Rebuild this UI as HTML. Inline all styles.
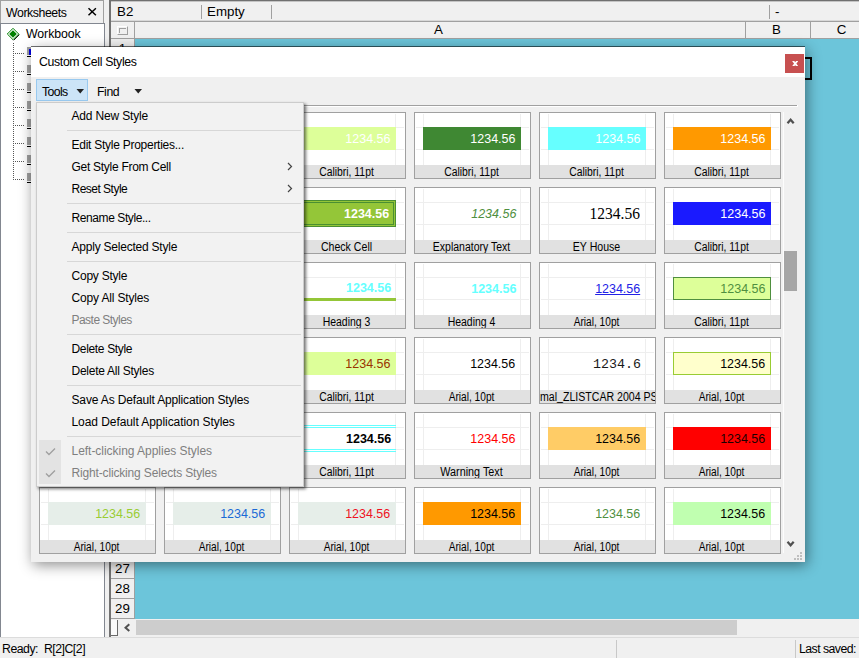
<!DOCTYPE html>
<html><head><meta charset="utf-8">
<style>
*{box-sizing:border-box;margin:0;padding:0}
html,body{width:859px;height:658px;overflow:hidden;background:#f0f0f0;font-family:"Liberation Sans",sans-serif;font-size:12px;color:#000}
.a{position:absolute}
.t{position:absolute;white-space:nowrap;line-height:1}
/* left panel */
#lh{left:0;top:0;width:104px;height:24px;border:1px solid #a0a0a0;background:#f0f0f0}
#lt{left:0;top:23px;width:105px;height:615px;border:1px solid #828790;background:#fff}
/* right panel */
#rp{left:109px;top:0;width:750px;height:638px;border-left:2px solid #727272;border-top:1px solid #707070;background:#f0f0f0;box-shadow:inset 0 1px 0 #c4c4c4}
#grid{left:135px;top:39px;width:724px;height:580px;background:#6cc5da}
.hc{position:absolute;top:22px;height:17px;border-right:1px solid #a0a0a0;border-bottom:1px solid #a0a0a0;background:#f0f0f0;font-size:13.33px;text-align:center;line-height:16px;padding-right:3px}
.rh{position:absolute;left:111px;width:24px;height:20px;border-right:1px solid #a0a0a0;border-bottom:1px solid #a0a0a0;background:#f0f0f0;font-size:13.33px;text-align:center;line-height:20px}
/* dialog */
#dlg{left:31px;top:47px;width:774px;height:515px;background:#f0f0f0;box-shadow:2px 3px 13px rgba(0,0,0,.45)}
#ttl{left:0;top:0;width:774px;height:30px;background:#fff}
.tile{position:absolute;width:117px;height:67px;border:1px solid #a0a0a0;background:#fff;overflow:hidden}
.tile .v1,.tile .v2{position:absolute;top:1px;width:1px;height:51px;background:#eee}
.tile .v1{left:8px}.tile .v2{left:105px}
.tile .h1,.tile .h2{position:absolute;left:1px;width:113px;height:1px;background:#eee}
.tile .h1{top:14px}.tile .h2{top:36px}
.tile .f{position:absolute;left:8px;top:14px;width:98px;height:23px}
.tile .n{position:absolute;right:14.5px;top:15px;height:23px;line-height:23px;font-size:12.5px;white-space:nowrap;transform-origin:100% 50%}
.tile .n.ar{top:14px;font-size:13.33px;transform:scaleX(.935)}
.tile .lb{position:absolute;left:0;top:52px;width:115px;height:13px;background:#e1e1e1;overflow:hidden}
.tile .lb span{position:absolute;left:-101px;width:315px;top:0;text-align:center;font-size:12px;line-height:14px;white-space:nowrap;transform:scaleX(.87)}
/* menu */
#menu{left:36px;top:102px;width:268px;height:385px;background:#f2f2f2;border:1px solid #ccc;box-shadow:2px 2px 3px rgba(0,0,0,.55)}
.mi{position:absolute;left:34.5px;font-size:12px;line-height:22px;height:22px;white-space:nowrap}
.mi.d{color:#7f7f7f}
.ms{position:absolute;left:30px;width:234px;height:1px;background:#d7d7d7}
</style></head><body>
<!-- left -->
<div class="a" id="lh"></div>
<div class="t" style="left:6px;top:7px;font-size:12.3px;letter-spacing:-0.42px">Worksheets</div>
<svg class="a" style="left:87px;top:7px" width="10" height="9"><path d="M1.5 1.3L8.9 8.2M8.9 1.3L1.5 8.2" stroke="#000" stroke-width="1.5" fill="none"/></svg>
<div class="a" id="lt"></div>
<svg class="a" style="left:6px;top:27px" width="15" height="14"><path d="M7.6 13.3L13.3 7.6" stroke="#000" stroke-width="1" fill="none"/><path d="M7 1.3L12.7 7L7 12.7L1.3 7Z" fill="#fff" stroke="#008000" stroke-width="1"/><path d="M7 3.2L10.8 7L7 10.8L3.2 7Z" fill="#008000"/></svg>
<div class="t" style="left:26px;top:28px;font-size:12.3px;letter-spacing:-0.06px">Workbook</div>
<svg class="a" style="left:10px;top:42px" width="24" height="145" shape-rendering="crispEdges"><path d="M3.5 1V138" stroke="#555" stroke-width="1" stroke-dasharray="1 1" fill="none"/><g stroke="#555" stroke-width="1" stroke-dasharray="1 1" fill="none"><path d="M5 11.5H15M5 29.5H15M5 47.5H15M5 65.5H15M5 83.5H15M5 101.5H15M5 119.5H15M5 137.5H15"/></g><g fill="#a0a0a0"><rect x="17" y="5" width="4" height="8"/><rect x="17" y="23" width="4" height="8"/><rect x="17" y="41" width="4" height="8"/><rect x="17" y="59" width="4" height="8"/><rect x="17" y="77" width="4" height="8"/><rect x="17" y="95" width="4" height="8"/><rect x="17" y="113" width="4" height="8"/><rect x="17" y="131" width="4" height="8"/></g><rect x="19" y="7" width="2" height="6" fill="#0000e0"/><g fill="#000"><rect x="17" y="14" width="4" height="1"/><rect x="17" y="32" width="4" height="1"/><rect x="17" y="50" width="4" height="1"/><rect x="17" y="68" width="4" height="1"/><rect x="17" y="86" width="4" height="1"/><rect x="17" y="104" width="4" height="1"/><rect x="17" y="122" width="4" height="1"/><rect x="17" y="140" width="4" height="1"/></g></svg>
<!-- right -->
<div class="a" id="rp"></div>
<div class="t" style="left:117px;top:5px;font-size:13.33px">B2</div>
<div class="a" style="left:201px;top:5px;width:1px;height:14px;background:#a0a0a0"></div>
<div class="t" style="left:207px;top:5px;font-size:13.33px">Empty</div>
<div class="a" style="left:271px;top:5px;width:1px;height:14px;background:#a0a0a0"></div>
<div class="a" style="left:769px;top:5px;width:1px;height:14px;background:#a0a0a0"></div>
<div class="t" style="left:775px;top:5px;font-size:13.33px">-</div>
<div class="a" style="left:111px;top:20px;width:748px;height:1px;background:#d8d8d8"></div><div class="a" style="left:111px;top:21px;width:748px;height:1px;background:#a0a0a0"></div>
<div class="hc" style="left:111px;width:24px"></div>
<div class="a" style="left:117px;top:26px;width:11px;height:9px;border:1px solid #a0a0a0;border-top-color:#fff;border-left-color:#fff"></div><div class="a" style="left:119px;top:28px;width:7px;height:5px;border-top:1px solid #a0a0a0;border-left:1px solid #a0a0a0"></div>
<div class="hc" style="left:135px;width:611px">A</div>
<div class="hc" style="left:746px;width:65px">B</div>
<div class="hc" style="left:811px;width:48px;text-align:left;padding-left:25.7px;padding-right:0;border-right:0">C</div>
<div class="a" id="grid"></div>
<div class="rh" style="top:39px">1</div>
<div class="rh" style="top:559px">27</div>
<div class="rh" style="top:579px">28</div>
<div class="rh" style="top:599px">29</div>
<div class="a" style="left:745px;top:57px;width:67px;height:23px;border:2px solid #000"></div>
<!-- hscroll -->
<div class="a" style="left:111px;top:619px;width:748px;height:18px;background:#f0f0f0"></div>
<div class="a" style="left:111px;top:620px;width:7px;height:16px;border-right:1px solid #696969;border-bottom:1px solid #696969;background:#fafafa"></div>
<svg class="a" style="left:123px;top:623px" width="8" height="10"><path d="M6.3 1.3L2.5 4.7L6.3 8.1" stroke="#505050" stroke-width="2" fill="none"/></svg>
<div class="a" style="left:136px;top:620px;width:601px;height:15px;background:#cdcdcd"></div>
<!-- status -->
<div class="a" style="left:0;top:637px;width:859px;height:1px;background:#dcdcdc"></div>
<div class="t" style="left:2px;top:643px;font-size:12.3px;letter-spacing:-0.49px">Ready:&nbsp; R[2]C[2]</div>
<div class="a" style="left:616px;top:640px;width:1px;height:18px;background:#c8c8c8"></div>
<div class="a" style="left:795px;top:640px;width:1px;height:18px;background:#c8c8c8"></div>
<div class="t" style="left:799px;top:643px;font-size:12.3px;letter-spacing:-0.54px">Last saved:</div>

<!-- dialog -->
<div class="a" id="dlg">
<div class="a" style="left:0;top:-1px;width:774px;height:1px;background:rgba(0,0,0,.55)"></div><div class="a" id="ttl"></div>
<div class="t" style="left:8px;top:9px;font-size:12.3px;letter-spacing:-0.35px">Custom Cell Styles</div>
<div class="a" style="left:754px;top:7px;width:19px;height:19px;background:#c75050"></div>
<svg class="a" style="left:760.8px;top:14px" width="6.4" height="5.3" viewBox="0 0 6.4 5.3"><path d="M.9 -.3L5.5 5.6M5.5 -.3L.9 5.6" stroke="#fff" stroke-width="1.8" fill="none"/></svg>
<div class="a" style="left:5px;top:32px;width:52px;height:22px;border:1px solid #99c9ef;background:#cce4f7"></div>
<div class="t" style="left:11px;top:39px;font-size:12.3px;letter-spacing:-0.64px">Tools</div>
<svg class="a" style="left:45px;top:42px" width="9" height="5"><path d="M.5 0H8L4.25 4.5Z" fill="#222"/></svg>
<div class="t" style="left:66px;top:39px;font-size:12.3px;letter-spacing:-0.41px">Find</div>
<svg class="a" style="left:103px;top:42px" width="9" height="5"><path d="M.5 0H8L4.25 4.5Z" fill="#222"/></svg>
<div class="a" style="left:8px;top:58px;width:758px;height:1px;background:#a0a0a0"></div><div class="a" style="left:8px;top:59px;width:759px;height:1px;background:#fff"></div><div class="a" style="left:766px;top:58px;width:1px;height:1px;background:#fff"></div><div class="a" style="left:752px;top:65px;width:1px;height:441px;background:#fcfcfc"></div>
<div id="tiles">
<div class="tile" style="left:8px;top:65px"><i class="v1"></i><i class="v2"></i><i class="h1"></i><i class="h2"></i><div class="f" style="background:#ddff99;"></div><div class="n" style="color:#fff;">1234.56</div><div class="lb"><span style="transform:scaleX(0.865)">Calibri, 11pt</span></div></div>
<div class="tile" style="left:133px;top:65px"><i class="v1"></i><i class="v2"></i><i class="h1"></i><i class="h2"></i><div class="f" style="background:#3f8833;"></div><div class="n" style="color:#fff;">1234.56</div><div class="lb"><span style="transform:scaleX(0.865)">Calibri, 11pt</span></div></div>
<div class="tile" style="left:258px;top:65px"><i class="v1"></i><i class="v2"></i><i class="h1"></i><i class="h2"></i><div class="f" style="background:#ddff99;"></div><div class="n" style="color:#fff;">1234.56</div><div class="lb"><span style="transform:scaleX(0.865)">Calibri, 11pt</span></div></div>
<div class="tile" style="left:383px;top:65px"><i class="v1"></i><i class="v2"></i><i class="h1"></i><i class="h2"></i><div class="f" style="background:#3f8833;"></div><div class="n" style="color:#fff;">1234.56</div><div class="lb"><span style="transform:scaleX(0.865)">Calibri, 11pt</span></div></div>
<div class="tile" style="left:508px;top:65px"><i class="v1"></i><i class="v2"></i><i class="h1"></i><i class="h2"></i><div class="f" style="background:#66ffff;"></div><div class="n" style="color:#fff;">1234.56</div><div class="lb"><span style="transform:scaleX(0.865)">Calibri, 11pt</span></div></div>
<div class="tile" style="left:633px;top:65px"><i class="v1"></i><i class="v2"></i><i class="h1"></i><i class="h2"></i><div class="f" style="background:#ff9900;"></div><div class="n" style="color:#fff;">1234.56</div><div class="lb"><span style="transform:scaleX(0.865)">Calibri, 11pt</span></div></div>
<div class="tile" style="left:8px;top:140px"><i class="v1"></i><i class="v2"></i><i class="h1"></i><i class="h2"></i><div class="n" style="color:#000;">1234.56</div><div class="lb"><span style="transform:scaleX(0.865)">Calibri, 11pt</span></div></div>
<div class="tile" style="left:133px;top:140px"><i class="v1"></i><i class="v2"></i><i class="h1"></i><i class="h2"></i><div class="n" style="color:#000;">1234.56</div><div class="lb"><span style="transform:scaleX(0.865)">Calibri, 11pt</span></div></div>
<div class="tile" style="left:258px;top:140px"><i class="v1"></i><i class="v2"></i><i class="h1"></i><i class="h2"></i><div class="f" style="background:#94c638;border:3px double #4a8f32;left:6px;top:12px;width:100px;height:27px;"></div><div class="n" style="color:#fff;font-weight:bold;right:15.8px;">1234.56</div><div class="lb"><span style="transform:scaleX(0.882)">Check Cell</span></div></div>
<div class="tile" style="left:383px;top:140px"><i class="v1"></i><i class="v2"></i><i class="h1"></i><i class="h2"></i><div class="n" style="color:#4f8f3f;font-style:italic;right:13.6px;">1234.56</div><div class="lb"><span style="transform:scaleX(0.874)">Explanatory Text</span></div></div>
<div class="tile" style="left:508px;top:140px"><i class="v1"></i><i class="v2"></i><i class="h1"></i><i class="h2"></i><div class="n" style="color:#000;font-family:'Liberation Serif',serif;font-size:16px;transform:scaleX(.97);right:15.3px;top:14px;">1234.56</div><div class="lb"><span style="transform:scaleX(0.883)">EY House</span></div></div>
<div class="tile" style="left:633px;top:140px"><i class="v1"></i><i class="v2"></i><i class="h1"></i><i class="h2"></i><div class="f" style="background:#1a1aff;"></div><div class="n" style="color:#fff;">1234.56</div><div class="lb"><span style="transform:scaleX(0.865)">Calibri, 11pt</span></div></div>
<div class="tile" style="left:8px;top:215px"><i class="v1"></i><i class="v2"></i><i class="h1"></i><i class="h2"></i><div class="n" style="color:#000;">1234.56</div><div class="lb"><span style="transform:scaleX(0.865)">Calibri, 11pt</span></div></div>
<div class="tile" style="left:133px;top:215px"><i class="v1"></i><i class="v2"></i><i class="h1"></i><i class="h2"></i><div class="n" style="color:#000;">1234.56</div><div class="lb"><span style="transform:scaleX(0.865)">Calibri, 11pt</span></div></div>
<div class="tile" style="left:258px;top:215px"><i class="v1"></i><i class="v2"></i><i class="h1"></i><i class="h2"></i><div style="position:absolute;left:8px;top:35px;width:98px;height:3px;background:#94c638"></div><div class="n" style="color:#66ffff;font-weight:bold;top:14px;right:13.8px;">1234.56</div><div class="lb"><span style="transform:scaleX(0.872)">Heading 3</span></div></div>
<div class="tile" style="left:383px;top:215px"><i class="v1"></i><i class="v2"></i><i class="h1"></i><i class="h2"></i><div class="n" style="color:#66ffff;font-weight:bold;right:13.6px;">1234.56</div><div class="lb"><span style="transform:scaleX(0.872)">Heading 4</span></div></div>
<div class="tile" style="left:508px;top:215px"><i class="v1"></i><i class="v2"></i><i class="h1"></i><i class="h2"></i><div class="n ar" style="color:#2222e6;text-decoration:underline;">1234.56</div><div class="lb"><span style="transform:scaleX(0.846)">Arial, 10pt</span></div></div>
<div class="tile" style="left:633px;top:215px"><i class="v1"></i><i class="v2"></i><i class="h1"></i><i class="h2"></i><div class="f" style="background:#ddff99;border:1px solid #4f8f3f;"></div><div class="n" style="color:#4f8f3f;">1234.56</div><div class="lb"><span style="transform:scaleX(0.865)">Calibri, 11pt</span></div></div>
<div class="tile" style="left:8px;top:290px"><i class="v1"></i><i class="v2"></i><i class="h1"></i><i class="h2"></i><div class="n ar" style="color:#000;">1234.56</div><div class="lb"><span style="transform:scaleX(0.846)">Arial, 10pt</span></div></div>
<div class="tile" style="left:133px;top:290px"><i class="v1"></i><i class="v2"></i><i class="h1"></i><i class="h2"></i><div class="n ar" style="color:#000;">1234.56</div><div class="lb"><span style="transform:scaleX(0.846)">Arial, 10pt</span></div></div>
<div class="tile" style="left:258px;top:290px"><i class="v1"></i><i class="v2"></i><i class="h1"></i><i class="h2"></i><div class="f" style="background:#ddff99;"></div><div class="n" style="color:#993300;">1234.56</div><div class="lb"><span style="transform:scaleX(0.865)">Calibri, 11pt</span></div></div>
<div class="tile" style="left:383px;top:290px"><i class="v1"></i><i class="v2"></i><i class="h1"></i><i class="h2"></i><div class="n ar" style="color:#000;">1234.56</div><div class="lb"><span style="transform:scaleX(0.846)">Arial, 10pt</span></div></div>
<div class="tile" style="left:508px;top:290px"><i class="v1"></i><i class="v2"></i><i class="h1"></i><i class="h2"></i><div class="n" style="color:#000;font-family:'Liberation Mono',monospace;font-size:13.33px;transform:none;top:15px;color:#1a1a1a;right:14px;">1234.6</div><div class="lb"><span style="left:0;width:auto;text-align:left;transform-origin:0 50%;transform:scaleX(0.882)">mal<i style="font-style:normal;position:relative;top:-1.5px">_</i>ZLISTCAR 2004 PSR</span></div></div>
<div class="tile" style="left:633px;top:290px"><i class="v1"></i><i class="v2"></i><i class="h1"></i><i class="h2"></i><div class="f" style="background:#ffffcc;border:1px solid #99cc33;"></div><div class="n ar" style="color:#000;">1234.56</div><div class="lb"><span style="transform:scaleX(0.846)">Arial, 10pt</span></div></div>
<div class="tile" style="left:8px;top:365px"><i class="v1"></i><i class="v2"></i><i class="h1"></i><i class="h2"></i><div class="n ar" style="color:#000;">1234.56</div><div class="lb"><span style="transform:scaleX(0.846)">Arial, 10pt</span></div></div>
<div class="tile" style="left:133px;top:365px"><i class="v1"></i><i class="v2"></i><i class="h1"></i><i class="h2"></i><div class="n ar" style="color:#000;">1234.56</div><div class="lb"><span style="transform:scaleX(0.846)">Arial, 10pt</span></div></div>
<div class="tile" style="left:258px;top:365px"><i class="v1"></i><i class="v2"></i><i class="h1"></i><i class="h2"></i><div style="position:absolute;left:8px;top:12px;width:98px;height:3px;border-top:1px solid #66ffff;border-bottom:1px solid #66ffff"></div><div style="position:absolute;left:8px;top:36px;width:98px;height:3px;border-top:1px solid #66ffff;border-bottom:1px solid #66ffff"></div><div class="n" style="color:#000;font-weight:bold;right:13.8px;">1234.56</div><div class="lb"><span style="transform:scaleX(0.865)">Calibri, 11pt</span></div></div>
<div class="tile" style="left:383px;top:365px"><i class="v1"></i><i class="v2"></i><i class="h1"></i><i class="h2"></i><div class="n" style="color:#ff0000;">1234.56</div><div class="lb"><span style="transform:scaleX(0.900)">Warning Text</span></div></div>
<div class="tile" style="left:508px;top:365px"><i class="v1"></i><i class="v2"></i><i class="h1"></i><i class="h2"></i><div class="f" style="background:#ffcc66;"></div><div class="n ar" style="color:#000;">1234.56</div><div class="lb"><span style="transform:scaleX(0.846)">Arial, 10pt</span></div></div>
<div class="tile" style="left:633px;top:365px"><i class="v1"></i><i class="v2"></i><i class="h1"></i><i class="h2"></i><div class="f" style="background:#ff0000;"></div><div class="n ar" style="color:#1a0000;">1234.56</div><div class="lb"><span style="transform:scaleX(0.846)">Arial, 10pt</span></div></div>
<div class="tile" style="left:8px;top:440px"><i class="v1"></i><i class="v2"></i><i class="h1"></i><i class="h2"></i><div class="f" style="background:#e6eee9;"></div><div class="n ar" style="color:#99cc33;">1234.56</div><div class="lb"><span style="transform:scaleX(0.846)">Arial, 10pt</span></div></div>
<div class="tile" style="left:133px;top:440px"><i class="v1"></i><i class="v2"></i><i class="h1"></i><i class="h2"></i><div class="f" style="background:#e6eee9;"></div><div class="n ar" style="color:#1a6ad6;">1234.56</div><div class="lb"><span style="transform:scaleX(0.846)">Arial, 10pt</span></div></div>
<div class="tile" style="left:258px;top:440px"><i class="v1"></i><i class="v2"></i><i class="h1"></i><i class="h2"></i><div class="f" style="background:#e6eee9;"></div><div class="n ar" style="color:#ee1122;">1234.56</div><div class="lb"><span style="transform:scaleX(0.846)">Arial, 10pt</span></div></div>
<div class="tile" style="left:383px;top:440px"><i class="v1"></i><i class="v2"></i><i class="h1"></i><i class="h2"></i><div class="f" style="background:#ff9900;"></div><div class="n ar" style="color:#000;">1234.56</div><div class="lb"><span style="transform:scaleX(0.846)">Arial, 10pt</span></div></div>
<div class="tile" style="left:508px;top:440px"><i class="v1"></i><i class="v2"></i><i class="h1"></i><i class="h2"></i><div class="n ar" style="color:#4f8f3f;">1234.56</div><div class="lb"><span style="transform:scaleX(0.846)">Arial, 10pt</span></div></div>
<div class="tile" style="left:633px;top:440px"><i class="v1"></i><i class="v2"></i><i class="h1"></i><i class="h2"></i><div class="f" style="background:#c0ffb0;"></div><div class="n ar" style="color:#000;">1234.56</div><div class="lb"><span style="transform:scaleX(0.846)">Arial, 10pt</span></div></div>
</div>
<!-- vscroll -->
<svg class="a" style="left:755px;top:70px" width="10" height="9"><path d="M1.5 6.3L4.6 2.7L7.7 6.3" stroke="#505050" stroke-width="2.2" fill="none"/></svg>
<svg class="a" style="left:755px;top:493px" width="10" height="9"><path d="M1.5 1.7L4.6 5.3L7.7 1.7" stroke="#505050" stroke-width="2.2" fill="none"/></svg>
<div class="a" style="left:753px;top:204px;width:13px;height:40px;background:#a6a6a6"></div>
<svg class="a" style="left:761px;top:505px" width="11" height="11"><g fill="#bfbfbf"><rect x="8" y="0" width="2" height="2"/><rect x="5" y="3" width="2" height="2"/><rect x="8" y="3" width="2" height="2"/><rect x="2" y="6" width="2" height="2"/><rect x="5" y="6" width="2" height="2"/><rect x="8" y="6" width="2" height="2"/></g></svg>
</div>
<!-- menu -->
<div class="a" id="menu">
<div class="mi" style="top:2px;letter-spacing:-0.16px">Add New Style</div>
<div class="ms" style="top:27px"></div>
<div class="mi" style="top:31px;letter-spacing:-0.26px">Edit Style Properties...</div>
<div class="mi" style="top:53px;letter-spacing:-0.28px">Get Style From Cell</div>
<div class="mi" style="top:75px;letter-spacing:-0.51px">Reset Style</div>
<div class="ms" style="top:100px"></div>
<div class="mi" style="top:104px;letter-spacing:-0.41px">Rename Style...</div>
<div class="ms" style="top:129px"></div>
<div class="mi" style="top:133px;letter-spacing:-0.22px">Apply Selected Style</div>
<div class="ms" style="top:158px"></div>
<div class="mi" style="top:162px;letter-spacing:-0.23px">Copy Style</div>
<div class="mi" style="top:184px;letter-spacing:-0.16px">Copy All Styles</div>
<div class="mi d" style="top:206px;letter-spacing:-0.53px">Paste Styles</div>
<div class="ms" style="top:231px"></div>
<div class="mi" style="top:235px;letter-spacing:-0.34px">Delete Style</div>
<div class="mi" style="top:257px;letter-spacing:-0.25px">Delete All Styles</div>
<div class="ms" style="top:282px"></div>
<div class="mi" style="top:286px;letter-spacing:-0.15px">Save As Default Application Styles</div>
<div class="mi" style="top:308px;letter-spacing:-0.07px">Load Default Application Styles</div>
<div class="ms" style="top:333px"></div>
<div class="a" style="left:2px;top:337px;width:22px;height:44px;background:#e3e3e3"></div>
<div class="mi d" style="top:337px;letter-spacing:-0.03px">Left-clicking Applies Styles</div>
<div class="mi d" style="top:359px;letter-spacing:-0.16px">Right-clicking Selects Styles</div>
<svg class="a" style="left:8px;top:344px" width="11" height="9"><path d="M1 4.5L4 7.5L10 1.5" stroke="#a0a0a0" stroke-width="1.4" fill="none"/></svg>
<svg class="a" style="left:8px;top:366px" width="11" height="9"><path d="M1 4.5L4 7.5L10 1.5" stroke="#a0a0a0" stroke-width="1.4" fill="none"/></svg>
<svg class="a" style="left:250px;top:58.5px" width="6" height="9"><path d="M1 1L4.5 4.5L1 8" stroke="#444" stroke-width="1.2" fill="none"/></svg>
<svg class="a" style="left:250px;top:80.5px" width="6" height="9"><path d="M1 1L4.5 4.5L1 8" stroke="#444" stroke-width="1.2" fill="none"/></svg>
</div>
</body></html>
